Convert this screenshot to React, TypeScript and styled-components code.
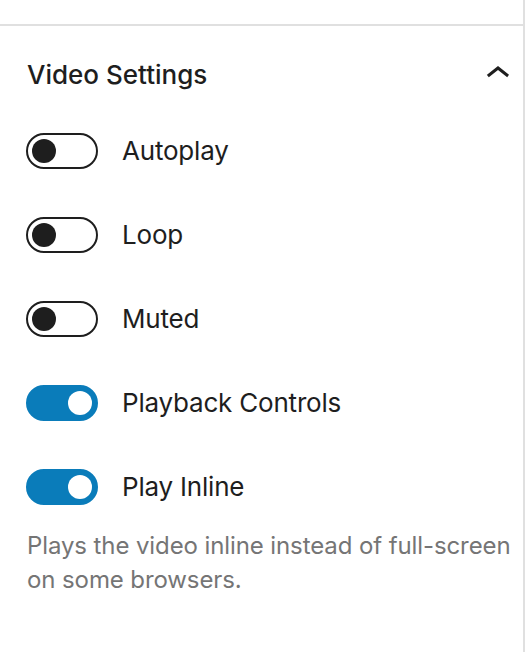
import styled, { createGlobalStyle } from "styled-components"

const GlobalStyle = createGlobalStyle`
  html, body {
    margin: 0;
    padding: 0;
    background: #fff;
  }
  body {
    font-family: Inter, "Noto Sans", sans-serif;
    color: #1e1e1e;
  }
`

const toggles = [
  { label: "Autoplay", checked: false },
  { label: "Loop", checked: false },
  { label: "Muted", checked: false },
  { label: "Playback Controls", checked: true },
  { label: "Play Inline", checked: true },
]

const ChevronUp = () => (
  <svg width="48" height="48" viewBox="0 0 24 24" aria-hidden="true">
    <path d="M6.5 12.4L12 8l5.5 4.4-.9 1.2L12 10l-4.6 3.6-1-1.2z" fill="#1e1e1e" />
  </svg>
)

export default function App() {
  return (
    <>
      <GlobalStyle />
      <Sidebar>
        <PrevPanel />
        <Panel>
          <PanelHeader>
            <PanelTitle>Video Settings</PanelTitle>
            <ChevronUp />
          </PanelHeader>
          <PanelBody>
            {toggles.map((t) => (
              <ToggleRow key={t.label}>
                <Track $checked={t.checked}>
                  <Thumb $checked={t.checked} />
                </Track>
                <ToggleLabel>{t.label}</ToggleLabel>
              </ToggleRow>
            ))}
            <Help>Plays the video inline instead of full-screen on some browsers.</Help>
          </PanelBody>
        </Panel>
      </Sidebar>
    </>
  )
}

const Sidebar = styled.div`
  width: 525px;
  min-height: 652px;
  box-sizing: border-box;
  border-right: 2px solid #e0e0e0;
`

const PrevPanel = styled.div`
  height: 24px;
  border-bottom: 2px solid #e0e0e0;
`

const Panel = styled.section`
  display: flex;
  flex-direction: column;
`

const PanelHeader = styled.div`
  height: 96px;
  display: flex;
  align-items: center;
  justify-content: space-between;
  padding: 0 1px 0 27px;
`

const PanelTitle = styled.h2`
  margin: 2px 0 0;
  font-size: 26px;
  font-weight: 500;
  line-height: 1;
  color: #1e1e1e;
`

const PanelBody = styled.div`
  padding: 11px 26px 0 26px;
  display: flex;
  flex-direction: column;
`

const ToggleRow = styled.div`
  display: flex;
  align-items: center;
  height: 36px;
  gap: 24px;
  margin-bottom: 48px;

  &:last-of-type {
    margin-bottom: 0;
  }
`

const Track = styled.span<{ $checked: boolean }>`
  position: relative;
  flex: none;
  width: 72px;
  height: 36px;
  box-sizing: border-box;
  border-radius: 18px;
  border: 2px solid ${(p) => (p.$checked ? "#0a7cba" : "#1e1e1e")};
  background: ${(p) => (p.$checked ? "#0a7cba" : "#fff")};
`

const Thumb = styled.span<{ $checked: boolean }>`
  position: absolute;
  top: 4px;
  left: ${(p) => (p.$checked ? "40px" : "4px")};
  width: 24px;
  height: 24px;
  border-radius: 50%;
  background: ${(p) => (p.$checked ? "#fff" : "#1e1e1e")};
`

const ToggleLabel = styled.span`
  font-size: 26px;
  line-height: 36px;
  color: #1e1e1e;
  letter-spacing: -0.2px;
`

const Help = styled.p`
  margin: 24px -20px 0 1px;
  font-size: 24px;
  line-height: 34px;
  letter-spacing: -0.1px;
  color: #757575;
`
